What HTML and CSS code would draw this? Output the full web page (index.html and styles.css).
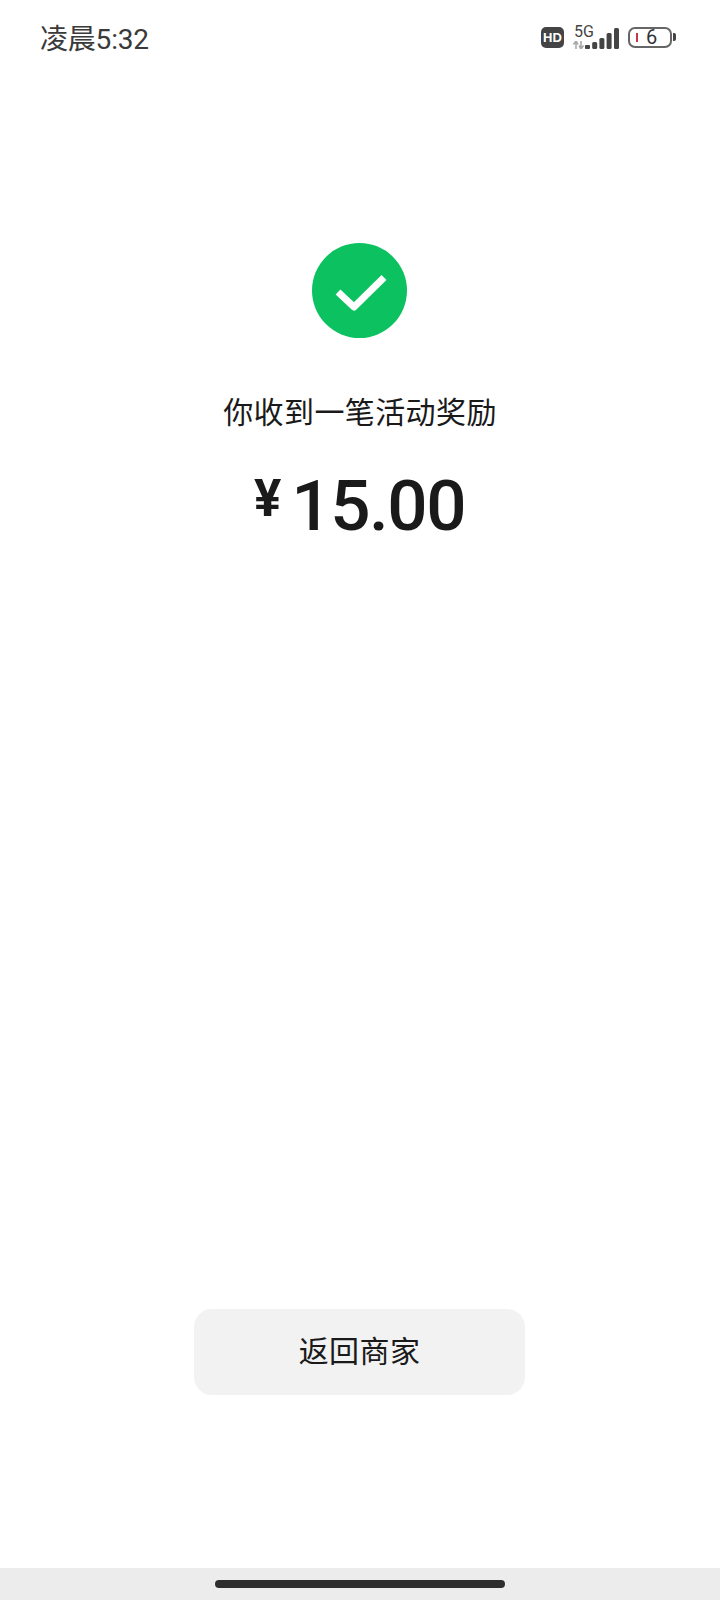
FILE: index.html
```html
<!DOCTYPE html>
<html lang="zh-CN">
  <head>
    <meta charset="UTF-8" />
    <meta name="viewport" content="width=device-width, initial-scale=1.0" />
    <title>活动奖励</title>
    <link rel="stylesheet" href="styles.css">
  </head>
  <body>
    <div class="page">
      <div class="status-bar">
        <span class="time">凌晨5:32</span>
        <div class="status-icons">
          <svg class="hd" width="23" height="21" viewBox="0 0 23 21">
            <rect width="23" height="21" rx="5" fill="#444"/>
            <text x="11.5" y="15" text-anchor="middle" class="hd-text">HD</text>
          </svg>
          <div class="network">
            <span class="net-label">5G</span>
            <svg class="net-arrows" width="11" height="8" viewBox="0 0 11 8">
              <path d="M3 0v8M3 0L0.5 3.5M3 0L5 3.5M8 8V0M8 8l2.5-3.5M8 8L6 4.5" stroke="#aaa" stroke-width="1.6" fill="none"/>
            </svg>
          </div>
          <svg class="signal" width="34" height="21" viewBox="0 0 34 21">
            <rect x="0" y="17" width="5" height="4" rx="1" fill="#444"/>
            <rect x="7.2" y="14" width="5" height="7" rx="1.5" fill="#444"/>
            <rect x="14.4" y="10" width="5" height="11" rx="1.5" fill="#444"/>
            <rect x="21.6" y="5" width="5" height="16" rx="1.5" fill="#444"/>
            <rect x="29" y="0" width="5" height="21" rx="1.5" fill="#444"/>
          </svg>
          <div class="battery">
            <div class="battery-body">
              <i class="battery-level"></i>
              <span class="battery-num">6</span>
            </div>
            <i class="battery-nub"></i>
          </div>
        </div>
      </div>

      <div class="result">
        <svg class="check" width="95" height="95" viewBox="0 0 95 95">
          <circle cx="47.5" cy="47.5" r="47.5" fill="#0bc160"/>
          <path d="M26 49L42 64L72 34.5" stroke="#fff" stroke-width="7" fill="none" stroke-linejoin="round"/>
        </svg>
        <p class="title">你收到一笔活动奖励</p>
        <div class="amount">
          <span class="yen">¥</span>
          <span class="value">15.00</span>
        </div>
      </div>

      <div class="actions">
        <button type="button" class="btn">返回商家</button>
      </div>

      <div class="nav-bar">
        <i class="home-pill"></i>
      </div>
    </div>
  </body>
</html>
```

FILE: styles.css
```css
* {
  box-sizing: border-box;
}
body {
  margin: 0;
  background: #fff;
  font-family: Roboto, "Noto Sans CJK SC", sans-serif;
  color: #1a1a1a;
}
.page {
  width: 720px;
  height: 1600px;
  display: flex;
  flex-direction: column;
  overflow: hidden;
}
.status-bar {
  height: 74px;
  padding: 0 44px 0 40px;
  display: flex;
  justify-content: space-between;
  align-items: center;
}
.time {
  font-size: 28px;
  letter-spacing: -0.2px;
  color: #3a3a3a;
}
.status-icons {
  display: flex;
  align-items: center;
}
.hd {
  margin-right: 8px;
}
.hd-text {
  font-family: "Liberation Sans", sans-serif;
  font-size: 13px;
  font-weight: 700;
  fill: #fff;
}
.network {
  width: 22px;
  height: 24px;
  margin-right: -9px;
  display: flex;
  flex-direction: column;
  align-items: flex-start;
  justify-content: space-between;
}
.net-label {
  margin-left: 2px;
  font-size: 16px;
  line-height: 13px;
  color: #444;
}
.net-arrows {
  margin-left: 1px;
}
.signal {
  margin: 3px 9px 0 0;
}
.battery {
  display: flex;
  align-items: center;
  gap: 1px;
}
.battery-body {
  width: 44px;
  height: 21px;
  padding-left: 6px;
  border: 2px solid #666;
  border-radius: 7px;
  display: flex;
  align-items: center;
}
.battery-level {
  width: 2px;
  height: 9px;
  background: #c8364a;
}
.battery-num {
  margin-left: 8px;
  font-size: 20px;
  line-height: 17px;
  color: #333;
}
.battery-nub {
  width: 3px;
  height: 8px;
  background: #444;
  border-radius: 0 2px 2px 0;
}
.result {
  padding: 169px 1px 0 0;
  display: flex;
  flex-direction: column;
  align-items: center;
}
.title {
  margin: 53px 0 0 1px;
  font-size: 30px;
  line-height: 44px;
  letter-spacing: 0.4px;
  color: #1a1a1a;
}
.amount {
  margin-top: 29px;
  display: flex;
  align-items: flex-start;
}
.yen {
  font-size: 51px;
  font-weight: 700;
  line-height: 70px;
  margin-right: 10px;
}
.value {
  font-size: 71px;
  font-weight: 500;
  line-height: 84px;
  letter-spacing: -1.5px;
}
.actions {
  margin-top: auto;
  padding: 0 1px 173px 0;
  display: flex;
  justify-content: center;
}
.btn {
  width: 331px;
  height: 86px;
  padding: 0 0 6px;
  border: 0;
  border-radius: 18px;
  background: #f2f2f2;
  font-family: inherit;
  font-size: 30px;
  letter-spacing: 0.4px;
  color: #1a1a1a;
}
.nav-bar {
  height: 32px;
  padding-top: 12px;
  background: #ececec;
  display: flex;
  justify-content: center;
}
.home-pill {
  width: 290px;
  height: 8px;
  border-radius: 4px;
  background: #2e2e2e;
}
```
